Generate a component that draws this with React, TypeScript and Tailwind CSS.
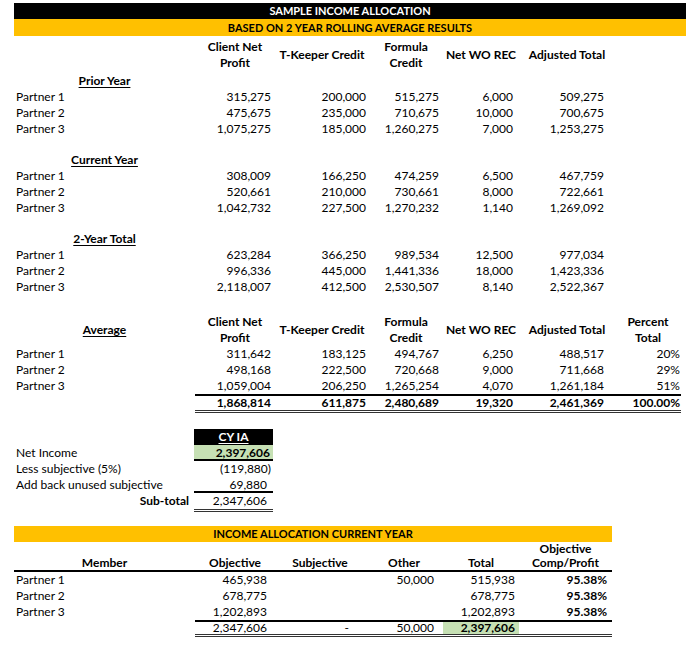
import React from "react";

type Row = { name: string; values: string[] };

// column widths taken from the sheet: label, client net, t-keeper, formula, net wo, adjusted, percent
const GRID = "grid grid-cols-[181px_80px_94px_74px_76px_96px_66px]";
const PAD = ["pr-[4px]", "pr-[3px]", "pr-[4px]", "pr-[6px]", "pr-[11px]", "pr-[1px]"];

const BOTTOM_GRID = "grid grid-cols-[181px_80px_94px_74px_76px_93px]";
const BOTTOM_PAD = ["pr-[8px]", "pr-[20px]", "pr-[9px]", "pr-[4px]", "pr-[5px]"];

const priorYear: Row[] = [
  { name: "Partner 1", values: ["315,275", "200,000", "515,275", "6,000", "509,275"] },
  { name: "Partner 2", values: ["475,675", "235,000", "710,675", "10,000", "700,675"] },
  { name: "Partner 3", values: ["1,075,275", "185,000", "1,260,275", "7,000", "1,253,275"] },
];

const currentYear: Row[] = [
  { name: "Partner 1", values: ["308,009", "166,250", "474,259", "6,500", "467,759"] },
  { name: "Partner 2", values: ["520,661", "210,000", "730,661", "8,000", "722,661"] },
  { name: "Partner 3", values: ["1,042,732", "227,500", "1,270,232", "1,140", "1,269,092"] },
];

const twoYear: Row[] = [
  { name: "Partner 1", values: ["623,284", "366,250", "989,534", "12,500", "977,034"] },
  { name: "Partner 2", values: ["996,336", "445,000", "1,441,336", "18,000", "1,423,336"] },
  { name: "Partner 3", values: ["2,118,007", "412,500", "2,530,507", "8,140", "2,522,367"] },
];

const average: Row[] = [
  { name: "Partner 1", values: ["311,642", "183,125", "494,767", "6,250", "488,517", "20%"] },
  { name: "Partner 2", values: ["498,168", "222,500", "720,668", "9,000", "711,668", "29%"] },
  { name: "Partner 3", values: ["1,059,004", "206,250", "1,265,254", "4,070", "1,261,184", "51%"] },
];

const averageTotal = ["1,868,814", "611,875", "2,480,689", "19,320", "2,461,369", "100.00%"];

const allocation: Row[] = [
  { name: "Partner 1", values: ["465,938", "", "50,000", "515,938", "95.38%"] },
  { name: "Partner 2", values: ["678,775", "", "", "678,775", "95.38%"] },
  { name: "Partner 3", values: ["1,202,893", "", "", "1,202,893", "95.38%"] },
];

function DataRow({ row }: { row: Row }) {
  return (
    <div className={`${GRID} h-4 leading-4`}>
      <div className="pl-[2px]">{row.name}</div>
      {row.values.map((v, i) => (
        <div key={i} className={`text-right ${PAD[i]}`}>
          {v}
        </div>
      ))}
    </div>
  );
}

function Block({ title, rows }: { title: string; rows: Row[] }) {
  return (
    <div>
      <div className={`${GRID} h-4 leading-4`}>
        <div className="text-center font-bold underline underline-offset-2">{title}</div>
      </div>
      {rows.map((r) => (
        <DataRow key={r.name} row={r} />
      ))}
    </div>
  );
}

function ColumnHeaders({ label, percent }: { label?: string; percent?: boolean }) {
  return (
    <div className={`${GRID} font-bold leading-4 items-center`}>
      <div className="text-center underline underline-offset-2">{label}</div>
      <div className="text-center">
        Client Net
        <br />
        Profit
      </div>
      <div className="text-center">T-Keeper Credit</div>
      <div className="text-center">
        Formula
        <br />
        Credit
      </div>
      <div className="text-center">Net WO REC</div>
      <div className="text-center">Adjusted Total</div>
      <div className="text-center">
        {percent ? (
          <>
            Percent
            <br />
            Total
          </>
        ) : null}
      </div>
    </div>
  );
}

export default function App() {
  return (
    <div className="w-[686px] h-[648px] bg-white text-black text-[12px] font-['Lato','Liberation_Sans',sans-serif] overflow-hidden">
      {/* title bars */}
      <div className="ml-[14px] pt-[3px] text-[11px]">
        <div className="h-4 bg-black text-white font-bold text-center leading-4">SAMPLE INCOME ALLOCATION</div>
        <div className="h-[17px] bg-[#ffc000] font-bold text-center leading-[17px]">
          BASED ON 2 YEAR ROLLING AVERAGE RESULTS
        </div>
      </div>

      <div className="ml-[14px] w-[667px]">
        <div className="mt-[3px]">
          <ColumnHeaders />
        </div>

        <div className="mt-[2px]">
          <Block title="Prior Year" rows={priorYear} />
        </div>
        <div className="mt-[15px]">
          <Block title="Current Year" rows={currentYear} />
        </div>
        <div className="mt-[15px]">
          <Block title="2-Year Total" rows={twoYear} />
        </div>

        {/* average section */}
        <div className="mt-[19px]">
          <ColumnHeaders label="Average" percent />
          {average.map((r) => (
            <DataRow key={r.name} row={r} />
          ))}
          <div className={`${GRID} font-bold`}>
            <div />
            <div className="col-span-6 grid grid-cols-[80px_94px_74px_76px_96px_66px] border-t-2 border-black border-b-[3px] border-b-[#333] border-double h-[19px] leading-[14px]">
              {averageTotal.map((v, i) => (
                <div key={i} className={`text-right ${PAD[i]}`}>
                  {v}
                </div>
              ))}
            </div>
          </div>
        </div>

        {/* CY IA */}
        <div className="mt-4 grid grid-cols-[180px_79px] leading-4">
          <div />
          <div className="h-4 bg-black text-white font-bold text-center underline underline-offset-2">CY IA</div>

          <div className="pl-[2px] h-4">Net Income</div>
          <div className="h-4 bg-[#c6e0b4] font-bold text-right pr-[3px] border-b-2 border-black">2,397,606</div>

          <div className="pl-[2px] h-4">Less subjective (5%)</div>
          <div className="h-4 text-right pr-[2px]">(119,880)</div>

          <div className="pl-[2px] h-4">Add back unused subjective</div>
          <div className="h-4 text-right pr-[6px] border-b-2 border-black">69,880</div>

          <div className="h-4 font-bold text-right pr-[5px]">Sub-total</div>
          <div className="h-[19px] text-right pr-[6px] border-b-[3px] border-double border-[#333]">2,347,606</div>
        </div>
      </div>

      {/* income allocation current year */}
      <div className="ml-[14px] mt-[14px] w-[598px]">
        <div className="h-4 bg-[#ffc000] font-bold text-center leading-4 text-[11px]">INCOME ALLOCATION CURRENT YEAR</div>
        <div className={`${BOTTOM_GRID} font-bold leading-[14px] items-end h-[30px] border-b-2 border-black`}>
          <div className="text-center">Member</div>
          <div className="text-center">Objective</div>
          <div className="text-center pr-[4px]">Subjective</div>
          <div className="text-center pr-[4px]">Other</div>
          <div className="text-center">Total</div>
          <div className="text-center">
            Objective
            <br />
            Comp/Profit
          </div>
        </div>
        {allocation.map((r) => (
          <div key={r.name} className={`${BOTTOM_GRID} h-4 leading-4`}>
            <div className="pl-[2px]">{r.name}</div>
            {r.values.map((v, i) => (
              <div key={i} className={`text-right ${BOTTOM_PAD[i]} ${i === 4 ? "font-bold" : ""}`}>
                {v}
              </div>
            ))}
          </div>
        ))}
        <div className={BOTTOM_GRID}>
          <div />
          <div className="col-span-5 grid grid-cols-[80px_94px_74px_76px_93px] border-t-2 border-black border-b-[3px] border-b-[#333] border-double h-[17px] leading-[12px]">
            <div className="text-right pr-[8px]">2,347,606</div>
            <div className="text-right pr-[20px]">-</div>
            <div className="text-right pr-[9px]">50,000</div>
            <div className="text-right pr-[4px] bg-[#c6e0b4] font-bold">2,397,606</div>
            <div />
          </div>
        </div>
      </div>
    </div>
  );
}
